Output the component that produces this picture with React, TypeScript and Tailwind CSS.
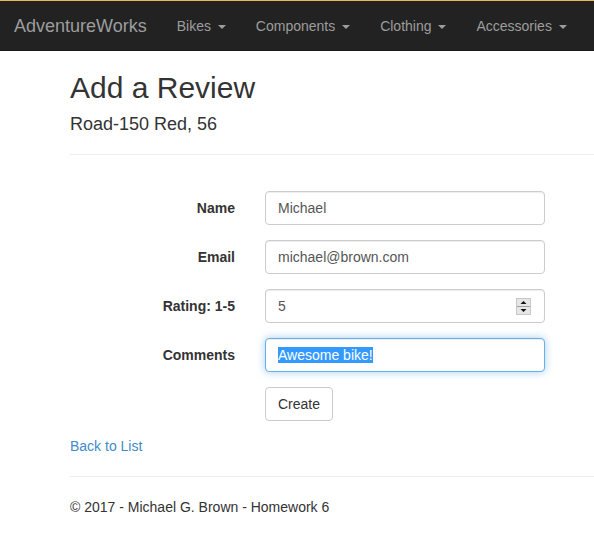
import React from "react";

const navItems = ["Bikes", "Components", "Clothing", "Accessories"];

function Caret() {
  return (
    <span className="ml-[3px] inline-block align-middle w-0 h-0 border-t-[4px] border-t-[#9d9d9d] border-l-[4px] border-l-transparent border-r-[4px] border-r-transparent" />
  );
}

function Spinner() {
  return (
    <svg className="absolute right-[13px] top-[8px]" width="15" height="17" viewBox="0 0 15 17">
      <rect x="0.5" y="0.5" width="14" height="16" fill="#e6e6e6" stroke="#c8c8c8" />
      <line x1="1" y1="8.5" x2="14" y2="8.5" stroke="#a0a0a0" />
      <polygon points="4.5,6 10.5,6 7.5,3" fill="#111" />
      <polygon points="4.5,11 10.5,11 7.5,14" fill="#111" />
    </svg>
  );
}

const inputBase =
  "relative w-[280px] h-[34px] rounded-[4px] border bg-white px-[12px] py-[6px] text-[14px] leading-[20px] text-[#555]";

export default function App() {
  return (
    <div className="min-h-[541px] bg-white text-[14px] leading-[20px] text-[#333] font-['Liberation_Sans',Arial,sans-serif]">
      <div className="h-px bg-[#e9b94f]" />
      <nav className="h-[50px] bg-[#222] border-b border-[#1a1a1a] flex items-start">
        <span className="pl-[14px] pr-[15px] pt-[15px] text-[18px] leading-[20px] text-[#9d9d9d]">
          AdventureWorks
        </span>
        <ul className="flex">
          {navItems.map((item) => (
            <li key={item} className="px-[15px] pt-[15px] text-[14px] leading-[20px] text-[#9d9d9d]">
              {item} <Caret />
            </li>
          ))}
        </ul>
      </nav>

      <main className="pl-[70px]">
        <h2 className="mt-[20px] text-[30px] leading-[33px] font-normal text-[#333]">Add a Review</h2>
        <h4 className="mt-[10px] text-[18px] leading-[20px] font-normal text-[#333]">Road-150 Red, 56</h4>
        <hr className="mt-[20px] border-t border-[#eee]" />

        <form className="mt-[36px] flex flex-col gap-[15px]">
          <div className="flex gap-[30px]">
            <label className="w-[165px] pt-[7px] text-right font-bold">Name</label>
            <div className={`${inputBase} border-[#ccc] shadow-[inset_0_1px_1px_rgba(0,0,0,0.075)]`}>Michael</div>
          </div>
          <div className="flex gap-[30px]">
            <label className="w-[165px] pt-[7px] text-right font-bold">Email</label>
            <div className={`${inputBase} border-[#ccc] shadow-[inset_0_1px_1px_rgba(0,0,0,0.075)]`}>
              michael@brown.com
            </div>
          </div>
          <div className="flex gap-[30px]">
            <label className="w-[165px] pt-[7px] text-right font-bold">Rating: 1-5</label>
            <div className={`${inputBase} border-[#ccc] shadow-[inset_0_1px_1px_rgba(0,0,0,0.075)]`}>
              5
              <Spinner />
            </div>
          </div>
          <div className="flex gap-[30px]">
            <label className="w-[165px] pt-[7px] text-right font-bold">Comments</label>
            <div
              className={`${inputBase} border-[#66afe9] shadow-[inset_0_1px_1px_rgba(0,0,0,0.075),0_0_8px_rgba(102,175,233,0.6)]`}
            >
              <span className="bg-[#3399ff] text-white">Awesome bike!</span>
            </div>
          </div>
          <div className="flex pl-[195px]">
            <button
              type="button"
              className="h-[34px] rounded-[4px] border border-[#ccc] bg-white px-[12px] text-[14px] leading-[20px] text-[#333]"
            >
              Create
            </button>
          </div>
        </form>

        <div className="mt-[15px]">
          <a className="text-[#428bca]">Back to List</a>
        </div>

        <hr className="mt-[20px] border-t border-[#eee]" />
        <footer className="mt-[20px]">
          <p>© 2017 - Michael G. Brown - Homework 6</p>
        </footer>
      </main>
    </div>
  );
}
